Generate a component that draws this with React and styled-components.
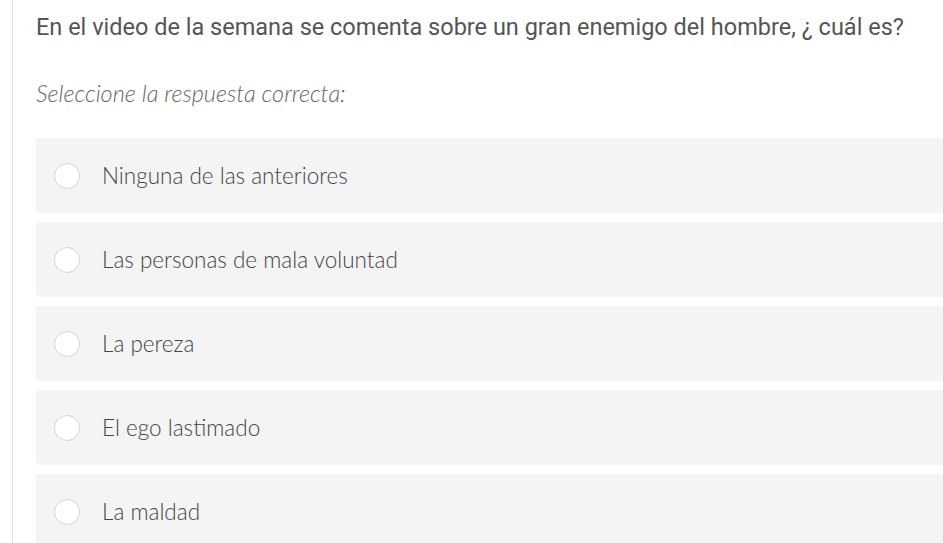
import styled, { createGlobalStyle } from 'styled-components';

const GlobalStyle = createGlobalStyle`
  body {
    margin: 0;
    background: #ffffff;
  }
`;

const Page = styled.div`
  width: 943px;
  height: 543px;
  overflow: hidden;
  display: flex;
`;

const Rail = styled.div`
  width: 12px;
  flex-shrink: 0;
  border-right: 1px solid #e3e3e3;
`;

const Content = styled.div`
  flex: 1;
  padding-left: 23px;
  padding-top: 12px;
  margin-right: -10px;
`;

const Question = styled.h2`
  margin: 0;
  font-family: Roboto, "Liberation Sans", sans-serif;
  font-weight: 400;
  font-size: 23.5px;
  line-height: 30px;
  color: #555555;
  white-space: nowrap;
`;

const Hint = styled.p`
  margin: 36px 0 0;
  font-family: Lato, "Open Sans", sans-serif;
  font-style: italic;
  font-weight: 300;
  font-size: 23.5px;
  line-height: 30px;
  color: #666666;
`;

const Options = styled.div`
  margin-top: 30px;
  display: flex;
  flex-direction: column;
  gap: 9px;
`;

const Option = styled.label`
  height: 75px;
  display: flex;
  align-items: center;
  padding-left: 18px;
  background: #f4f4f4;
  border-radius: 4px;
  cursor: pointer;
`;

const Radio = styled.span`
  width: 24px;
  height: 24px;
  border-radius: 50%;
  background: #ffffff;
  border: 1px solid #d8d8d8;
  flex-shrink: 0;
`;

const OptionText = styled.span`
  margin-left: 22px;
  font-family: Lato, "Open Sans", sans-serif;
  font-weight: 300;
  font-size: 22.5px;
  color: #444444;
`;

const answers = [
  'Ninguna de las anteriores',
  'Las personas de mala voluntad',
  'La pereza',
  'El ego lastimado',
  'La maldad',
];

const App = () => {
  return (
    <>
      <GlobalStyle />
      <Page>
        <Rail />
        <Content>
          <Question>
            En el video de la semana se comenta sobre un gran enemigo del hombre, ¿ cuál es?
          </Question>
          <Hint>Seleccione la respuesta correcta:</Hint>
          <Options>
            {answers.map((a) => (
              <Option key={a}>
                <Radio />
                <OptionText>{a}</OptionText>
              </Option>
            ))}
          </Options>
        </Content>
      </Page>
    </>
  );
};

export default App;
